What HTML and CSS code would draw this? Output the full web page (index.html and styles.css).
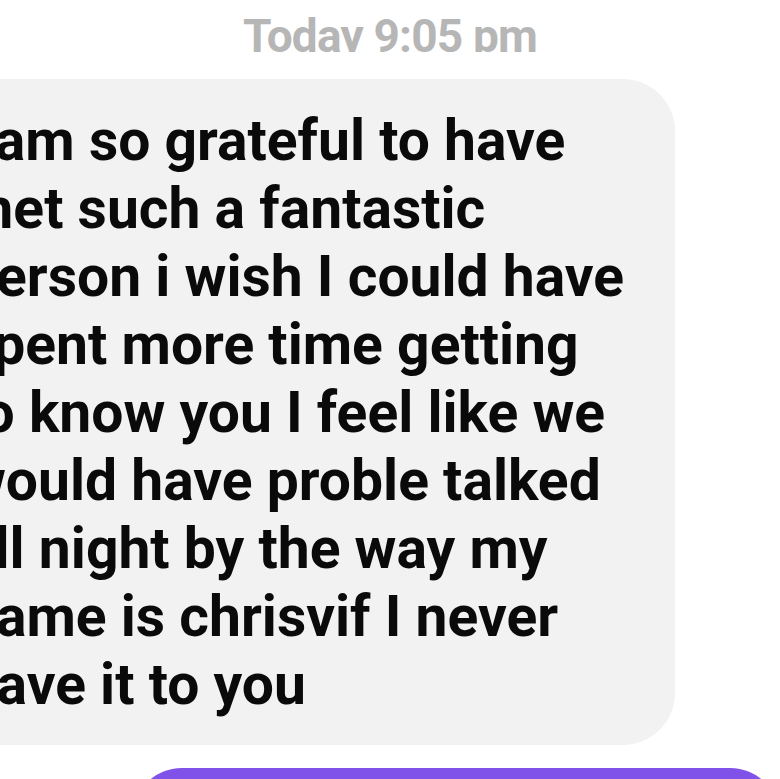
FILE: index.html
```html
<!DOCTYPE html>
<html>
<head>
<meta charset="utf-8">
<link rel="stylesheet" href="styles.css">
</head>
<body>
<div class="thread">
  <div class="stamp"><span>Today 9:05 pm</span></div>
  <div class="row in">
    <div class="bubble gray">I am so grateful to have<br>met such a fantastic<br>person i wish I could have<br>spent more time getting<br>to know you I feel like we<br>would have proble talked<br>all night by the way my<br>name is chrisvif I never<br>gave it to you</div>
  </div>
  <div class="row out">
    <div class="bubble purple">Thank you so much</div>
  </div>
</div>
</body>
</html>
```
FILE: styles.css
```css
html, body {
  margin: 0;
  padding: 0;
  background: #ffffff;
}
body {
  width: 780px;
  height: 779px;
  overflow: hidden;
  font-family: Roboto, "Liberation Sans", sans-serif;
}
.thread {
  display: flex;
  flex-direction: column;
}
.stamp {
  height: 52px;
  overflow: hidden;
  text-align: center;
  box-sizing: border-box;
  padding-top: 13px;
  font-size: 46px;
  line-height: 1;
  font-weight: 700;
  letter-spacing: -0.8px;
  color: #b6b6b6;
  margin-bottom: 27px;
}
.row {
  display: flex;
}
.row.in {
  margin-left: -64px;
}
.bubble {
  font-size: 57px;
  line-height: 68px;
  font-weight: 700;
  color: #0a0a0a;
  white-space: nowrap;
}
.gray {
  background: #f2f2f2;
  width: 739px;
  box-sizing: border-box;
  padding: 28px 0 26px 28px;
  border-radius: 52px;
}
.row.out {
  margin-top: 23px;
  margin-left: 132px;
}
.purple {
  background: #8152ea;
  color: #ffffff;
  width: 800px;
  height: 120px;
  border-radius: 50px;
  padding: 20px 40px;
  box-sizing: border-box;
}
```
